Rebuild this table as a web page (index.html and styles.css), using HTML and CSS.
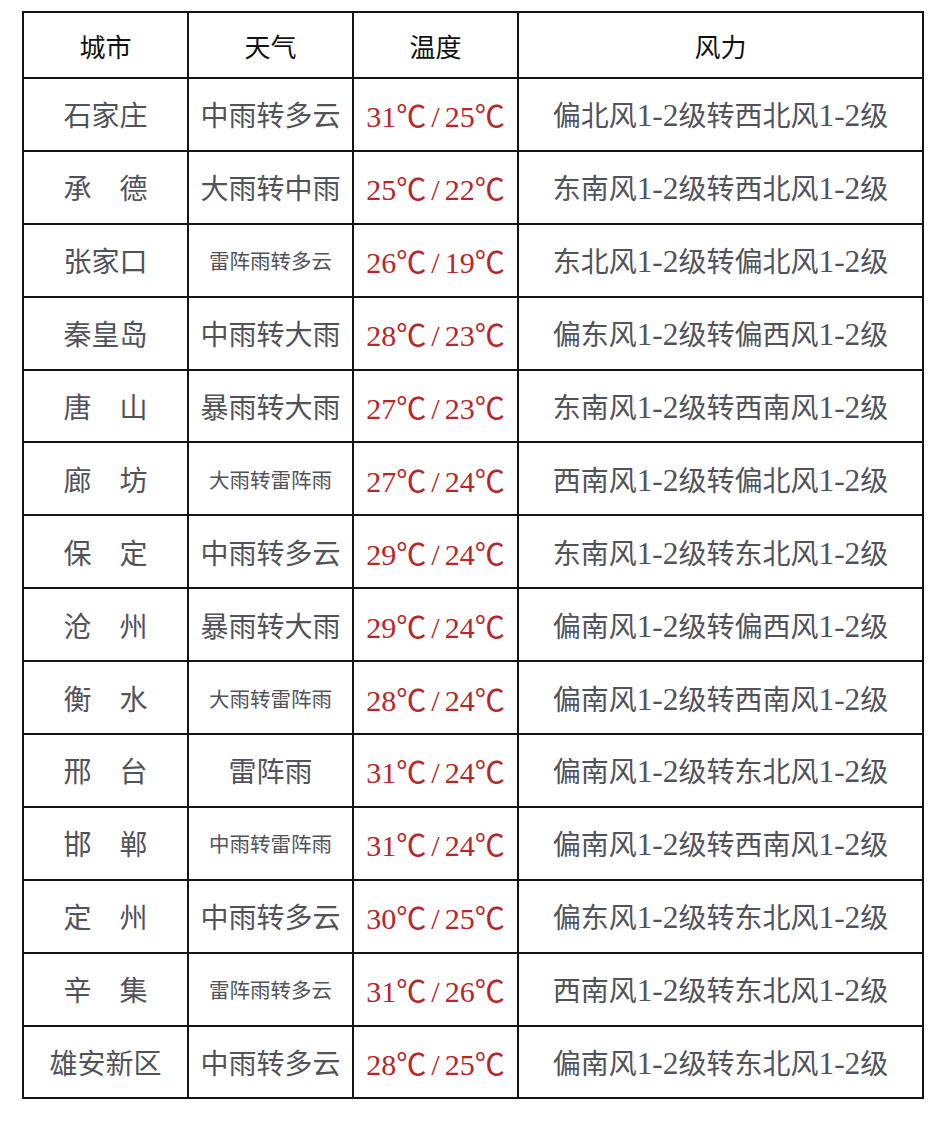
FILE: index.html
```html
<!DOCTYPE html>
<html lang="zh-CN">
<head>
<meta charset="utf-8">
<title>天气预报</title>
<link rel="stylesheet" href="styles.css">
</head>
<body>
<table class="wx">
  <colgroup>
    <col class="c-city"><col class="c-wx"><col class="c-temp"><col class="c-wind">
  </colgroup>
  <thead>
    <tr><th>城市</th><th>天气</th><th>温度</th><th>风力</th></tr>
  </thead>
  <tbody>
    <tr><td>石家庄</td><td>中雨转多云</td><td class="t">31℃<span class="sl">/</span>25℃</td><td class="w">偏北风<span class="n">1-2</span>级转西北风<span class="n">1-2</span>级</td></tr>
    <tr><td>承　德</td><td>大雨转中雨</td><td class="t">25℃<span class="sl">/</span>22℃</td><td class="w">东南风<span class="n">1-2</span>级转西北风<span class="n">1-2</span>级</td></tr>
    <tr><td>张家口</td><td class="sm">雷阵雨转多云</td><td class="t">26℃<span class="sl">/</span>19℃</td><td class="w">东北风<span class="n">1-2</span>级转偏北风<span class="n">1-2</span>级</td></tr>
    <tr><td>秦皇岛</td><td>中雨转大雨</td><td class="t">28℃<span class="sl">/</span>23℃</td><td class="w">偏东风<span class="n">1-2</span>级转偏西风<span class="n">1-2</span>级</td></tr>
    <tr><td>唐　山</td><td>暴雨转大雨</td><td class="t">27℃<span class="sl">/</span>23℃</td><td class="w">东南风<span class="n">1-2</span>级转西南风<span class="n">1-2</span>级</td></tr>
    <tr><td>廊　坊</td><td class="sm">大雨转雷阵雨</td><td class="t">27℃<span class="sl">/</span>24℃</td><td class="w">西南风<span class="n">1-2</span>级转偏北风<span class="n">1-2</span>级</td></tr>
    <tr><td>保　定</td><td>中雨转多云</td><td class="t">29℃<span class="sl">/</span>24℃</td><td class="w">东南风<span class="n">1-2</span>级转东北风<span class="n">1-2</span>级</td></tr>
    <tr><td>沧　州</td><td>暴雨转大雨</td><td class="t">29℃<span class="sl">/</span>24℃</td><td class="w">偏南风<span class="n">1-2</span>级转偏西风<span class="n">1-2</span>级</td></tr>
    <tr><td>衡　水</td><td class="sm">大雨转雷阵雨</td><td class="t">28℃<span class="sl">/</span>24℃</td><td class="w">偏南风<span class="n">1-2</span>级转西南风<span class="n">1-2</span>级</td></tr>
    <tr><td>邢　台</td><td>雷阵雨</td><td class="t">31℃<span class="sl">/</span>24℃</td><td class="w">偏南风<span class="n">1-2</span>级转东北风<span class="n">1-2</span>级</td></tr>
    <tr><td>邯　郸</td><td class="sm">中雨转雷阵雨</td><td class="t">31℃<span class="sl">/</span>24℃</td><td class="w">偏南风<span class="n">1-2</span>级转西南风<span class="n">1-2</span>级</td></tr>
    <tr><td>定　州</td><td>中雨转多云</td><td class="t">30℃<span class="sl">/</span>25℃</td><td class="w">偏东风<span class="n">1-2</span>级转东北风<span class="n">1-2</span>级</td></tr>
    <tr><td>辛　集</td><td class="sm">雷阵雨转多云</td><td class="t">31℃<span class="sl">/</span>26℃</td><td class="w">西南风<span class="n">1-2</span>级转东北风<span class="n">1-2</span>级</td></tr>
    <tr><td>雄安新区</td><td>中雨转多云</td><td class="t">28℃<span class="sl">/</span>25℃</td><td class="w">偏南风<span class="n">1-2</span>级转东北风<span class="n">1-2</span>级</td></tr>
  </tbody>
</table>
</body>
</html>
```
FILE: styles.css
```css
html, body {
  margin: 0;
  padding: 0;
  background: #ffffff;
}
body {
  padding: 11px 0 0 22px;
  font-family: "Liberation Serif", "Noto Sans CJK SC", serif;
}
.wx {
  border-collapse: collapse;
  table-layout: fixed;
  width: 901px;
}
.c-city, .c-wx, .c-temp { width: 165px; }
.c-wind { width: 405px; }
.wx th, .wx td {
  border: 2px solid #141414;
  text-align: center;
  vertical-align: middle;
  padding: 0;
  white-space: nowrap;
}
.wx th {
  height: 64px;
  font-size: 26px;
  font-weight: normal;
  color: #111111;
}
.wx td {
  height: 70.9px;
  font-size: 28px;
  color: #52525a;
}
.wx td.sm {
  font-size: 20.5px;
}
.wx td.t {
  color: #b8262a;
  font-size: 30px;
}
.sl {
  margin: 0 5px;
}
.wx td.w {
  font-size: 28px;
}
.n {
  font-size: 1.12em;
  line-height: 1;
}
```
